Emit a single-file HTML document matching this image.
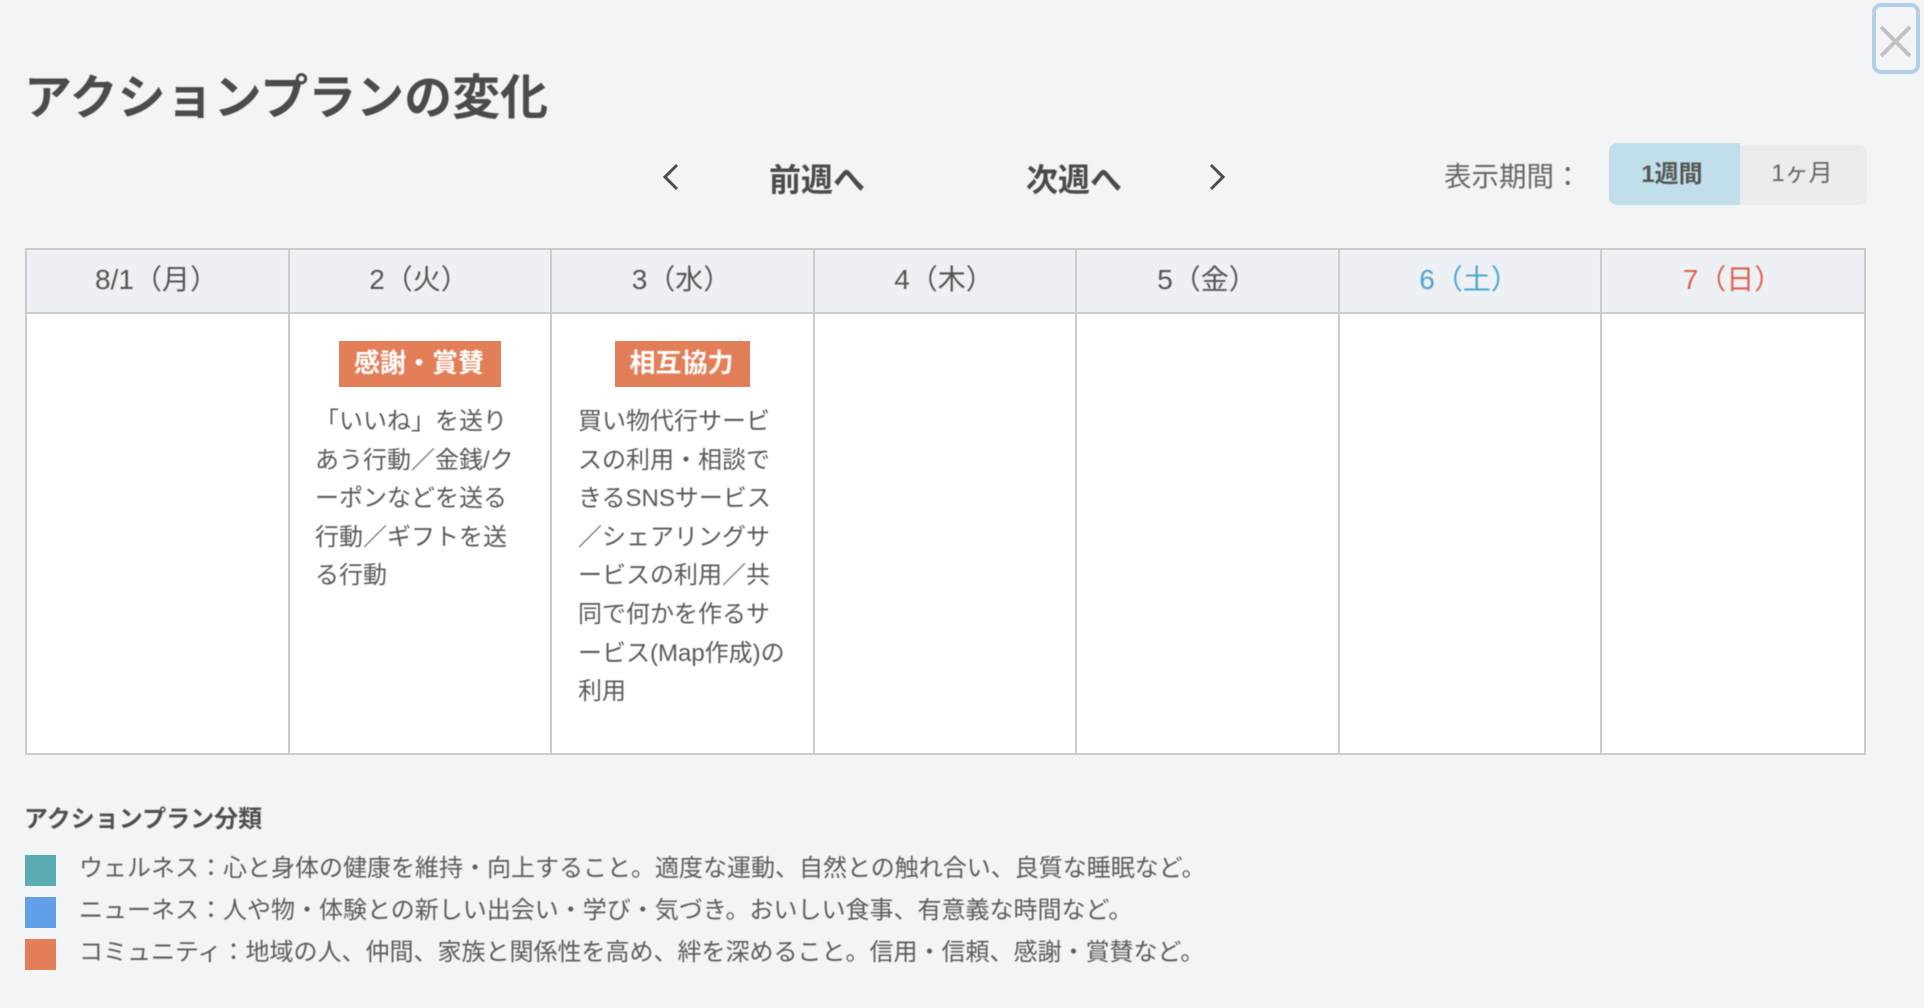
<!DOCTYPE html>
<html lang="ja">
<head>
<meta charset="utf-8">
<style>
html,body{margin:0;padding:0;width:1924px;height:1008px;overflow:hidden;background:#f3f4f6}
body{font-family:"Liberation Sans","Noto Sans CJK JP",sans-serif;color:#555;position:relative}
.a{position:absolute;white-space:nowrap}
.t{filter:blur(.6px)}
.line{background:#cbcccd;position:absolute}
.h{position:absolute;top:250px;height:63px;line-height:60px;text-align:center;font-size:28px;color:#555;background:#edf1f5}
.p{font-size:24px;line-height:38.6px;color:#5a5a5a}
.lg{font-size:24px;line-height:34px;color:#5c5c5c;left:79px}
</style>
</head>
<body>
<!-- close -->
<div class="a" style="left:1872px;top:3px;width:40px;height:63px;border:4px solid #b5cee8;border-radius:9px"></div>
<svg class="a" style="left:1878px;top:24px" width="36" height="36" viewBox="0 0 36 36"><path d="M3 3L32 32M32 3L3 32" stroke="#c0c2c4" stroke-width="4" fill="none"/></svg>

<!-- title -->
<div class="a t" style="left:24px;top:67px;font-size:48px;line-height:64px;font-weight:700;color:#4b4b4b">アクションプランの変化</div>

<!-- nav -->
<svg class="a" style="left:658px;top:161px" width="26" height="32" viewBox="0 0 26 32"><path d="M19 4L7 16L19 28" stroke="#4d4d4d" stroke-width="3" fill="none"/></svg>
<div class="a t" style="left:769px;top:157px;font-size:32px;line-height:46px;font-weight:700;color:#4a4a4a">前週へ</div>
<div class="a t" style="left:1026px;top:157px;font-size:32px;line-height:46px;font-weight:700;color:#4a4a4a">次週へ</div>
<svg class="a" style="left:1205px;top:161px" width="26" height="32" viewBox="0 0 26 32"><path d="M6 4L18 16L6 28" stroke="#4d4d4d" stroke-width="3" fill="none"/></svg>
<div class="a t" style="left:1444px;top:156px;font-size:27.5px;line-height:42px;color:#666">表示期間：</div>

<!-- toggle -->
<div class="a" style="left:1740px;top:145px;width:127px;height:60px;background:#ececee;border-radius:0 8px 8px 0"></div>
<div class="a" style="left:1609px;top:143px;width:131px;height:62px;background:#c1dfea;border-radius:8px 0 0 8px"></div>
<div class="a t" style="left:1606px;top:145px;width:132px;text-align:center;font-size:24px;line-height:60px;font-weight:700;color:#555">1週間</div>
<div class="a t" style="left:1740px;top:144px;width:124px;text-align:center;font-size:24px;line-height:60px;color:#666">1ヶ月</div>

<!-- table -->
<div class="a" style="left:26px;top:248px;width:1839px;height:505px;background:#fff"></div>
<div class="h t" style="left:25px;width:263px">8/1（月）</div>
<div class="h t" style="left:288px;width:262px">2（火）</div>
<div class="h t" style="left:550px;width:263px">3（水）</div>
<div class="h t" style="left:813px;width:262px">4（木）</div>
<div class="h t" style="left:1076px;width:262px">5（金）</div>
<div class="h t" style="left:1338px;width:262px;color:#4ca3d1">6（土）</div>
<div class="h t" style="left:1600px;width:265px;color:#e0604a">7（日）</div>

<div class="line" style="left:25px;top:248px;width:1841px;height:2px"></div>
<div class="line" style="left:25px;top:312px;width:1841px;height:2px"></div>
<div class="line" style="left:25px;top:753px;width:1841px;height:2px"></div>
<div class="line" style="left:25px;top:248px;width:2px;height:506px"></div>
<div class="line" style="left:288px;top:248px;width:2px;height:506px"></div>
<div class="line" style="left:550px;top:248px;width:2px;height:506px"></div>
<div class="line" style="left:813px;top:248px;width:2px;height:506px"></div>
<div class="line" style="left:1075px;top:248px;width:2px;height:506px"></div>
<div class="line" style="left:1338px;top:248px;width:2px;height:506px"></div>
<div class="line" style="left:1600px;top:248px;width:2px;height:506px"></div>
<div class="line" style="left:1864px;top:248px;width:2px;height:506px"></div>

<!-- tags -->
<div class="a" style="left:339px;top:341px;width:162px;height:46px;background:#e37f58"></div>
<div class="a t" style="left:338px;top:342px;width:162px;text-align:center;font-size:26px;line-height:42px;font-weight:700;color:#fff">感謝・賞賛</div>
<div class="a" style="left:615px;top:341px;width:135px;height:46px;background:#e37f58"></div>
<div class="a t" style="left:614px;top:342px;width:135px;text-align:center;font-size:26px;line-height:42px;font-weight:700;color:#fff">相互協力</div>

<!-- paragraphs -->
<div class="a t p" style="left:315px;top:403px">「いいね」を送り<br>あう行動／金銭/ク<br>ーポンなどを送る<br>行動／ギフトを送<br>る行動</div>
<div class="a t p" style="left:578px;top:403px">買い物代行サービ<br>スの利用・相談で<br>きるSNSサービス<br>／シェアリングサ<br>ービスの利用／共<br>同で何かを作るサ<br>ービス(Map作成)の<br>利用</div>

<!-- legend -->
<div class="a t" style="left:24px;top:803px;font-size:24px;line-height:34px;font-weight:700;color:#4f4f4f">アクションプラン分類</div>
<div class="a" style="left:25px;top:855px;width:31px;height:31px;background:#5aacb2"></div>
<div class="a" style="left:25px;top:897px;width:31px;height:31px;background:#619fe8"></div>
<div class="a" style="left:25px;top:939px;width:31px;height:31px;background:#e37f58"></div>
<div class="a t lg" style="top:852px">ウェルネス：心と身体の健康を維持・向上すること。適度な運動、自然との触れ合い、良質な睡眠など。</div>
<div class="a t lg" style="top:894px">ニューネス：人や物・体験との新しい出会い・学び・気づき。おいしい食事、有意義な時間など。</div>
<div class="a t lg" style="top:936px">コミュニティ：地域の人、仲間、家族と関係性を高め、絆を深めること。信用・信頼、感謝・賞賛など。</div>
</body>
</html>
